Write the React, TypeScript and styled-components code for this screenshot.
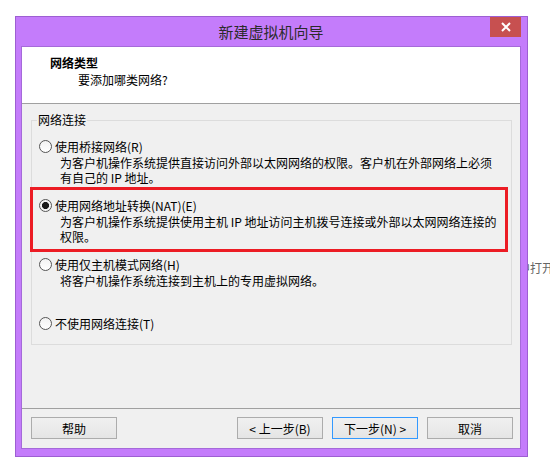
import styled, { createGlobalStyle } from "styled-components";

const GlobalStyle = createGlobalStyle`
  * { box-sizing: border-box; }
  html, body {
    margin: 0;
    padding: 0;
    width: 550px;
    height: 471px;
    overflow: hidden;
    background: #ffffff;
    font-family: "Noto Sans CJK SC", "Noto Sans", sans-serif;
    font-size: 12px;
    color: #000;
  }
`;

const Page = styled.div`
  position: relative;
  width: 550px;
  height: 471px;
  padding: 16px 0 0 15px;
`;

/* page text peeking out from behind the dialog */
const BehindText = styled.span`
  position: absolute;
  left: 518px;
  top: 261px;
  line-height: 14px;
  color: #666;
  white-space: nowrap;
`;

const Window = styled.div`
  position: relative;
  z-index: 1;
  width: 513px;
  height: 441px;
  display: flex;
  flex-direction: column;
  border: 1px solid #9d5fd2;
  background: #c47cfb;
  padding: 0 6px 7px 5px;
`;

const TitleBar = styled.div`
  height: 29px;
  display: grid;
  grid-template-columns: 1fr auto 1fr;
  align-items: center;
`;

const Title = styled.div`
  grid-column: 2;
  font-size: 15px;
  line-height: 20px;
  color: #2b2b2b;
`;

const CloseButton = styled.div`
  grid-column: 3;
  justify-self: end;
  align-self: start;
  width: 31px;
  height: 20px;
  background: #c75050;
  display: flex;
  align-items: center;
  justify-content: center;
`;

const Client = styled.div`
  flex: 1;
  display: flex;
  flex-direction: column;
  border: 1px solid #a56ad9;
  background: #f0f0f0;
`;

const Header = styled.div`
  height: 57px;
  background: #fff;
  border-bottom: 1px solid #a0a0a0;
  padding: 8px 0 0 28px;
  line-height: 16px;
`;

const HeaderTitle = styled.div`
  font-weight: bold;
`;

const HeaderSub = styled.div`
  margin-top: 1px;
  padding-left: 28px;
`;

const Body = styled.div`
  flex: 1;
  padding: 9px 8px 0 9px;
`;

const Group = styled.fieldset`
  margin: 0;
  padding: 0;
  border: 1px solid #dcdcdc;
  min-width: 0;
`;

const Legend = styled.legend`
  margin-left: 5px;
  padding: 0 1px;
  line-height: 14px;
`;

const Options = styled.div`
  display: flex;
  flex-direction: column;
  gap: 12px;
  padding: 11px 0 12px 7px;
`;

const Option = styled.div<{ $marked?: boolean }>`
  position: relative;
  display: flex;
  flex-direction: column;

  ${(p) =>
    p.$marked &&
    `
    &::after {
      content: "";
      position: absolute;
      top: -10px;
      left: -9px;
      right: 3px;
      bottom: -8px;
      border: 3px solid #ec1c24;
      pointer-events: none;
    }
  `}
`;

const OptionLabel = styled.div`
  display: flex;
  align-items: center;
  gap: 3px;
  height: 17px;
  line-height: 15px;
  white-space: nowrap;
`;

const Radio = styled.span<{ $checked?: boolean }>`
  width: 13px;
  height: 13px;
  border-radius: 50%;
  border: 1px solid #555;
  flex-shrink: 0;
  background: ${(p) =>
    p.$checked
      ? "radial-gradient(circle, #1a1a1a 0 3.3px, #f4f4f4 3.8px)"
      : "linear-gradient(#f2f2f2, #ffffff)"};
`;

const Desc = styled.div`
  padding-left: 21px;
  line-height: 15px;
  min-height: 30px;
  white-space: nowrap;
`;

const Footer = styled.div`
  height: 40px;
  border-top: 1px solid #a0a0a0;
  display: flex;
  align-items: center;
  gap: 9px;
  padding: 0 7px 1px 9px;
`;

const Spacer = styled.div`
  flex: 1;
`;

const Button = styled.button<{ $default?: boolean }>`
  width: 86px;
  height: 22px;
  padding: 0;
  font-family: inherit;
  font-size: 12px;
  color: #000;
  border: 1px solid ${(p) => (p.$default ? "#3399ff" : "#acacac")};
  background: linear-gradient(#f0f0f0, #e5e5e5);
`;

const options = [
  {
    label: "使用桥接网络(R)",
    desc: [
      "为客户机操作系统提供直接访问外部以太网网络的权限。客户机在外部网络上必须",
      "有自己的 IP 地址。",
    ],
  },
  {
    label: "使用网络地址转换(NAT)(E)",
    desc: [
      "为客户机操作系统提供使用主机 IP 地址访问主机拨号连接或外部以太网网络连接的",
      "权限。",
    ],
    checked: true,
  },
  {
    label: "使用仅主机模式网络(H)",
    desc: ["将客户机操作系统连接到主机上的专用虚拟网络。"],
  },
  { label: "不使用网络连接(T)", desc: [] },
];

export default function App() {
  return (
    <>
      <GlobalStyle />
      <Page>
        <BehindText>中打开</BehindText>
        <Window>
          <TitleBar>
            <Title>新建虚拟机向导</Title>
            <CloseButton>
              <svg width="10" height="10" viewBox="0 0 10 10">
                <path d="M1 1 L9 9 M9 1 L1 9" stroke="#fff" strokeWidth="2" />
              </svg>
            </CloseButton>
          </TitleBar>
          <Client>
            <Header>
              <HeaderTitle>网络类型</HeaderTitle>
              <HeaderSub>要添加哪类网络?</HeaderSub>
            </Header>
            <Body>
              <Group>
                <Legend>网络连接</Legend>
                <Options>
                  {options.map((o) => (
                    <Option key={o.label} $marked={o.checked}>
                      <OptionLabel>
                        <Radio $checked={o.checked} />
                        {o.label}
                      </OptionLabel>
                      {o.desc.length > 0 && (
                        <Desc>
                          {o.desc.map((line) => (
                            <div key={line}>{line}</div>
                          ))}
                        </Desc>
                      )}
                    </Option>
                  ))}
                </Options>
              </Group>
            </Body>
            <Footer>
              <Button>帮助</Button>
              <Spacer />
              <Button>&lt; 上一步(B)</Button>
              <Button $default>下一步(N) &gt;</Button>
              <Button>取消</Button>
            </Footer>
          </Client>
        </Window>
      </Page>
    </>
  );
}
